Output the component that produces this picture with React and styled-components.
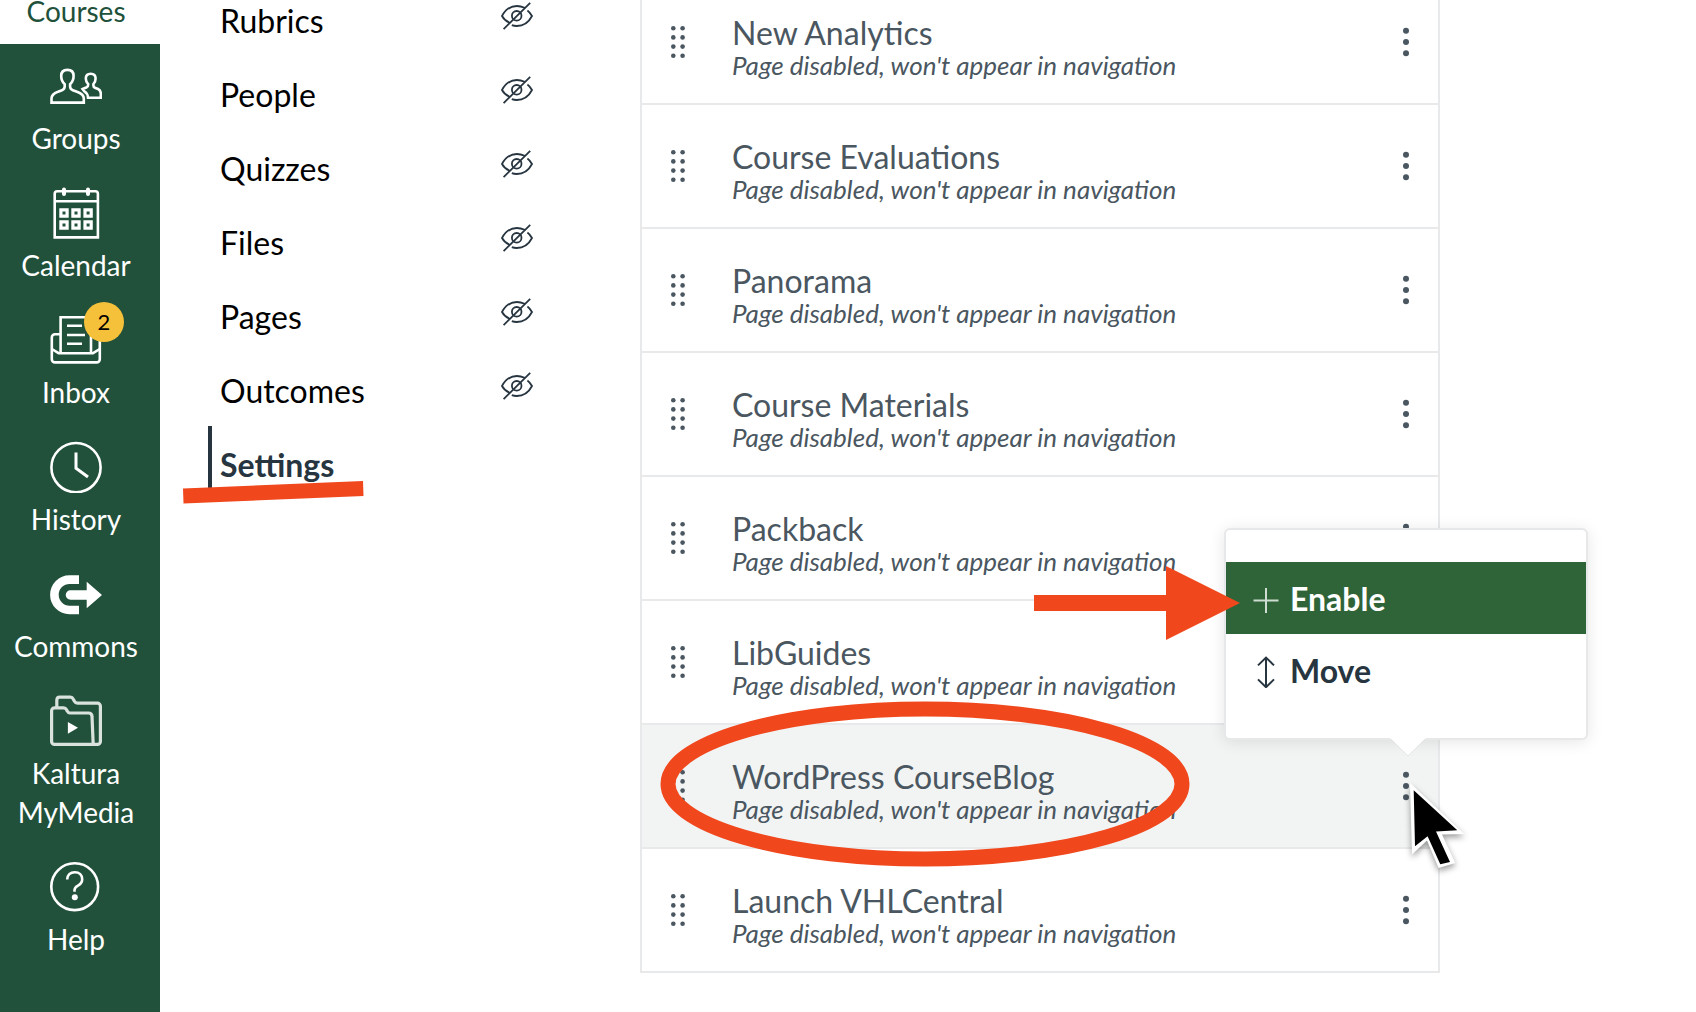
import styled, { createGlobalStyle, css } from 'styled-components';

const navItems = [
	{ label: 'Groups', icon: 'groups' },
	{ label: 'Calendar', icon: 'calendar' },
	{ label: 'Inbox', icon: 'inbox', badge: 2 },
	{ label: 'History', icon: 'history' },
	{ label: 'Commons', icon: 'commons' },
	{ label: 'Kaltura MyMedia', icon: 'media' },
	{ label: 'Help', icon: 'help' },
];

const courseLinks = ['Rubrics', 'People', 'Quizzes', 'Files', 'Pages', 'Outcomes'];

const tools = [
	'New Analytics',
	'Course Evaluations',
	'Panorama',
	'Course Materials',
	'Packback',
	'LibGuides',
	'WordPress CourseBlog',
	'Launch VHLCentral',
];

const selectedTool = 'WordPress CourseBlog';

const navIcons = {
	groups: (
		<>
			<path d='M1.5 42.6V38.6C1.5 35 4 33.2 8 31.8L12 30.2C14 29.4 14.7 28.6 14.7 26.6V24.2C12.2 21.8 11.2 19.2 11.2 15.9C11.2 12.1 13.6 9.9 17.4 9.9S23.6 12.1 23.6 15.9C23.6 19.2 22.6 21.8 20.1 24.2V26.6C20.1 28.6 20.8 29.4 22.8 30.2L27 31.8C31 33.2 33.8 35 33.8 38.6V42.6Z' />
			<path d='M32.6 29L36.8 27.2C38 26.6 38.2 25.8 38.2 24.2C36.4 22.6 35.8 20.8 35.8 18.6C35.8 15.6 37.8 13.8 40.7 13.8S45.6 15.6 45.6 18.6C45.6 20.8 45 22.6 43.4 24.2V25.6C43.4 26.8 43.8 27.4 45 27.8L48 29C50.2 30 50.8 31.4 50.8 33.4V37.7H38C37.8 35 37.4 33 34.4 31.4Z' />
		</>
	),
	calendar: (
		<>
			<path d='M4.7 50.4V6.8A2.6 2.6 0 0 1 7.3 4.2H45.3A2.6 2.6 0 0 1 47.9 6.8V50.4Z' />
			<path d='M4.7 14.3H47.9' strokeWidth='2.4' />
			<path d='M14 2.4V7M38 2.4V7' strokeWidth='4' strokeLinecap='round' />
			<path
				d='M10.9 22.9H17.1V29.1H10.9ZM22.9 22.9H29.1V29.1H22.9ZM35 22.9H41.2V29.1H35ZM10.9 34.9H17.1V41.1H10.9ZM22.9 34.9H29.1V41.1H22.9ZM35 34.9H41.2V41.1H35Z'
				strokeWidth='3.2'
			/>
		</>
	),
	inbox: (
		<>
			<path d='M10.6 39V3.3H41V39' />
			<path d='M17 11.8H32M17 21H35M17 29.8H32' />
			<path d='M10.6 20.2H5A3.2 3.2 0 0 0 1.8 23.4V45.2A3.2 3.2 0 0 0 5 48.4H46.6A3.2 3.2 0 0 0 49.8 45.2V23.4A3.2 3.2 0 0 0 46.6 20.2H41' />
			<path d='M1.8 35L8.6 39.2H43L49.8 35' />
		</>
	),
	history: (
		<>
			<circle cx='26' cy='26.6' r='24.6' />
			<path d='M26 11.6V27.2L38 36' strokeWidth='3' />
		</>
	),
	commons: (
		<>
			<path d='M29 11.6H19.6A15.2 15.2 0 0 0 19.6 42H29' strokeWidth='8.6' />
			<path
				d='M20.4 22.3H36.7V13.7L52 27L36.7 40.3V31.7H20.4A4.7 4.7 0 0 1 20.4 22.3Z'
				fill='#fff'
				stroke='none'
			/>
		</>
	),
	media: (
		<g stroke='#d9e2dd' strokeWidth='3.2'>
			<path d='M6.8 12V5A3 3 0 0 1 9.8 2.2H20.4C22 2.2 22.6 2.8 23.3 4.2L24.6 6.6C25.2 7.7 26 8.2 27.4 8.2H47.4A3 3 0 0 1 50.4 11.2V46.4A3 3 0 0 1 47.4 49.4H44' />
			<path d='M1.6 15.8A3 3 0 0 1 4.6 12.8H13.6C15 12.8 15.8 13.2 16.5 14.6L17.3 16.2C17.9 17.5 18.7 18 20 18H38.6A3.4 3.4 0 0 1 42 21.4L43.2 49.4H4.6A3 3 0 0 1 1.6 46.4Z' />
			<path d='M17.9 27L28 32.8L17.9 38.8Z' fill='#fff' stroke='none' />
		</g>
	),
	help: (
		<>
			<circle cx='24.7' cy='25.7' r='23.4' />
			<path d='M17.2 18.6C17.2 14 20.2 11.2 24.8 11.2S32.2 14 32.2 18.2C32.2 21.6 30.2 23.4 27.6 24.8C25.4 26 24.5 26.8 24.5 29.2V30.8' />
			<circle cx='24.8' cy='36.2' r='3' fill='#fff' stroke='none' />
		</>
	),
};

const HiddenIcon = () => (
	<EyeSvg viewBox='0 0 32 28' role='img' aria-label='Hidden'>
		<path d='M8.4 20.6C5.2 19.2 2.6 17 1 14C4.4 7.6 9.6 4 15.8 4C18.8 4 21.2 4.7 23.6 5.8M26.4 8.4C28.4 9.8 29.8 11.8 31 14C27.6 20.6 22.2 24 15.8 24C14 24 12.4 23.8 10.8 23.2M2.6 27.2L29.2 0.8' />
		<circle cx='15.7' cy='13.8' r='4.8' />
	</EyeSvg>
);

const ToolMenu = () => (
	<Menu role='menu'>
		<MenuItem role='menuitem' $active>
			<svg width='26' height='32' viewBox='0 0 26 32' fill='none' stroke='#cfdcd1' strokeWidth='2'>
				<path d='M13 6V31M0.5 18.5H25.5' />
			</svg>
			Enable
		</MenuItem>
		<MenuItem role='menuitem'>
			<svg width='26' height='36' viewBox='0 -4 26 36' fill='none' stroke='#273540' strokeWidth='2'>
				<path d='M13 1.6V31.2M5 9.4L13 1.6L21 9.4M5 23.4L13 31.2L21 23.4' />
			</svg>
			Move
		</MenuItem>
		<MenuTip viewBox='0 0 36 19' aria-hidden='true'>
			<path d='M0 0H36L18 18Z' fill='#fff' />
			<path d='M1 1L18 18L35 1' fill='none' stroke='#e4e7e8' />
		</MenuTip>
		<Arrow viewBox='0 0 206 76' aria-hidden='true'>
			<path d='M0 30H132V1L206 38L132 75V46H0Z' />
		</Arrow>
	</Menu>
);

const App = () => {
	return (
		<Page>
			<GlobalStyle />
			<Sidebar aria-label='Global navigation'>
				<CurrentItem href='#courses'>Courses</CurrentItem>
				{navItems.map(item => (
					<SideItem key={item.label} href={`#${item.icon}`}>
						<IconBox>
							<NavSvg viewBox='0 0 52 52' aria-hidden='true'>
								{navIcons[item.icon]}
							</NavSvg>
							{item.badge ? <Badge>{item.badge}</Badge> : null}
						</IconBox>
						{item.label}
					</SideItem>
				))}
			</Sidebar>

			<CourseNav aria-label='Course navigation'>
				{courseLinks.map(link => (
					<CourseLink key={link} href={`#${link}`}>
						{link}
						<HiddenIcon />
					</CourseLink>
				))}
				<CourseLink href='#settings' $active>
					Settings
					<Underline viewBox='0 0 181 24' aria-hidden='true'>
						<path d='M0 8.5L180 1L180.5 16L0.5 23.5Z' />
					</Underline>
				</CourseLink>
			</CourseNav>

			<Main>
				<ToolList>
					{tools.map(tool => (
						<ToolRow key={tool} $selected={tool === selectedTool}>
							<DragHandle aria-label={`Drag ${tool}`}>
								<svg width='14' height='32' viewBox='0 0 14 32' fill='#4a5660'>
									{[2.3, 11.4, 20.6, 29.7].map(y => (
										<g key={y}>
											<circle cx='2.3' cy={y} r='2.3' />
											<circle cx='11.6' cy={y} r='2.3' />
										</g>
									))}
								</svg>
							</DragHandle>
							<ToolText>
								<ToolName>{tool}</ToolName>
								<ToolNote>Page disabled, won't appear in navigation</ToolNote>
							</ToolText>
							<KebabWrap>
								<KebabButton aria-label={`Options for ${tool}`}>
									<svg width='6' height='30' viewBox='0 0 6 30' fill='#4a5660'>
										<circle cx='3' cy='3.7' r='3' />
										<circle cx='3' cy='15' r='3' />
										<circle cx='3' cy='26.3' r='3' />
									</svg>
								</KebabButton>
								{tool === selectedTool ? (
									<>
										<ToolMenu />
										<Cursor viewBox='0 0 56 90' aria-hidden='true'>
											<path d='M1 1L55.3 52L33 52.6L46.3 81L29.6 86L18 58.6L3 72.6Z' fill='#fff' />
											<path d='M4.7 8.3L48.3 48.3L27 49.6L41 80L31.3 82.3L18.6 54.3L6 64.3Z' fill='#000' />
										</Cursor>
									</>
								) : null}
							</KebabWrap>
							{tool === selectedTool ? (
								<Ring viewBox='0 0 530 166' aria-hidden='true'>
									<ellipse cx='265' cy='83' rx='257' ry='75' />
								</Ring>
							) : null}
						</ToolRow>
					))}
				</ToolList>
			</Main>
		</Page>
	);
};
export default App;

const GlobalStyle = createGlobalStyle`
	* {
		box-sizing: border-box;
	}
	body {
		margin: 0;
		background: #fff;
		font-family: Lato, 'Liberation Sans', sans-serif;
	}
	button {
		font-family: inherit;
		border: 0;
		padding: 0;
		background: none;
	}
	a {
		text-decoration: none;
	}
`;

const Page = styled.div`
	display: flex;
	min-height: 100vh;
	overflow: hidden;
`;

const Sidebar = styled.nav`
	display: flex;
	flex-direction: column;
	flex: 0 0 160px;
	background: #21513b;
	font-size: 28px;
	line-height: 39px;
	text-align: center;
`;

/* scrolled most of the way out of view */
const CurrentItem = styled.a`
	display: flex;
	flex-direction: column;
	justify-content: flex-end;
	align-items: center;
	height: 44px;
	padding: 0 8px 13px 0;
	background: #fff;
	color: #21513b;
`;

const SideItem = styled.a`
	display: flex;
	flex-direction: column;
	align-items: center;
	gap: 7px;
	padding: 16px 8px 13px 0;
	color: #fff;
`;

const IconBox = styled.span`
	position: relative;
	width: 52px;
	height: 52px;
`;

const NavSvg = styled.svg`
	display: block;
	width: 52px;
	height: 52px;
	fill: none;
	stroke: #fff;
	stroke-width: 2.6;
`;

const Badge = styled.span`
	position: absolute;
	top: -12px;
	right: -22px;
	width: 40px;
	height: 40px;
	border-radius: 50%;
	background: #f6c13a;
	color: #000;
	font-size: 22px;
	line-height: 40px;
`;

const CourseNav = styled.nav`
	display: flex;
	flex-direction: column;
	gap: 10px;
	flex: 0 0 480px;
	margin-top: -18px;
	padding: 0 107px 0 48px;
`;

const CourseLink = styled.a`
	position: relative;
	display: flex;
	justify-content: space-between;
	height: 64px;
	padding: 16px 0 0 8px;
	border-left: 4px solid transparent;
	color: #000;
	font-size: 32px;
	line-height: 46px;
	${({ $active }) =>
		$active &&
		css`
			border-color: #273540;
			color: #273540;
			font-weight: 700;
		`}
`;

const EyeSvg = styled.svg`
	width: 32px;
	height: 28px;
	margin-top: 4px;
	fill: none;
	stroke: #273540;
	stroke-width: 1.8;
`;

const Underline = styled.svg`
	position: absolute;
	left: -29px;
	top: 54px;
	width: 181px;
	height: 24px;
	fill: #f0471c;
`;

const Main = styled.main`
	flex: 1;
	min-width: 0;
`;

const ToolList = styled.ul`
	max-width: 800px;
	margin: -19px 0 0;
	padding: 0;
	border: 2px solid #e8e9ea;
	border-width: 0 2px;
	list-style: none;
`;

const ToolRow = styled.li`
	position: relative;
	display: flex;
	align-items: center;
	height: 124px;
	padding: 0 29px;
	border-bottom: 2px solid #e8e9ea;
	background: ${({ $selected }) => ($selected ? '#f2f4f4' : '#fff')};
	color: #4a5660;
	z-index: ${({ $selected }) => ($selected ? 1 : 0)};
`;

const DragHandle = styled.button`
	display: flex;
	width: 61px;
	cursor: grab;
`;

const ToolText = styled.div`
	flex: 1;
	min-width: 0;
	padding-top: 10px;
`;

const ToolName = styled.div`
	font-size: 32px;
	line-height: 36px;
`;

const ToolNote = styled.div`
	font-size: 26px;
	font-style: italic;
	line-height: 28px;
`;

const KebabWrap = styled.div`
	position: relative;
	display: flex;
`;

const KebabButton = styled.button`
	display: flex;
	cursor: pointer;
`;

const Menu = styled.div`
	position: absolute;
	right: -179px;
	bottom: 61px;
	width: 364px;
	padding: 32px 0;
	border: 2px solid #e6e8e9;
	border-radius: 6px;
	background: #fff;
	box-shadow: 0 2px 16px rgba(0, 0, 0, 0.1);
`;

const MenuItem = styled.button`
	display: flex;
	align-items: center;
	gap: 11px;
	width: 100%;
	height: 72px;
	padding: 0 27px;
	background: ${({ $active }) => ($active ? '#2f6438' : '#fff')};
	color: ${({ $active }) => ($active ? '#fff' : '#273540')};
	font-size: 32px;
	font-weight: 700;
`;

const MenuTip = styled.svg`
	position: absolute;
	top: 100%;
	left: 164px;
	width: 36px;
	height: 19px;
`;

const Arrow = styled.svg`
	position: absolute;
	right: 346px;
	top: 35px;
	width: 206px;
	height: 76px;
	fill: #f0471c;
`;

const Cursor = styled.svg`
	position: absolute;
	left: 6px;
	top: 11px;
	width: 56px;
	height: 90px;
	filter: drop-shadow(0 3px 3px rgba(0, 0, 0, 0.4));
`;

const Ring = styled.svg`
	position: absolute;
	left: 18px;
	top: -24px;
	width: 530px;
	height: 166px;
	fill: none;
	stroke: #f0471c;
	stroke-width: 15;
	pointer-events: none;
`;
